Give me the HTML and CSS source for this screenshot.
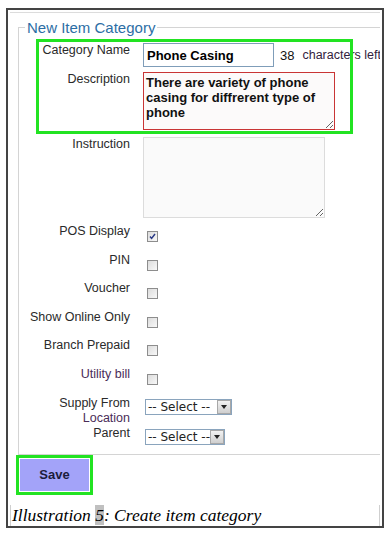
FILE: index.html
```html
<!DOCTYPE html>
<html lang="en">
<head>
    <meta charset="UTF-8">
    <meta name="viewport" content="width=device-width, initial-scale=1.0">
    <title>New Item Category</title>
    <link rel="stylesheet" href="styles.css">
</head>
<body>
    <div class="frame">
        <div class="sheet">
            <fieldset class="category-form">
                <legend>New Item Category</legend>
                <div class="marked">
                    <div class="row">
                        <label class="label label-inner">Category Name</label>
                        <div class="control">
                            <input class="text-input" type="text" value="Phone Casing">
                            <span class="count">38</span>
                            <span class="count-note">characters left</span>
                        </div>
                    </div>
                    <div class="row row-desc">
                        <label class="label label-inner">Description</label>
                        <textarea class="desc">There are variety of phone casing for diffrerent type of phone</textarea>
                    </div>
                </div>
                <div class="row row-instruction">
                    <label class="label">Instruction</label>
                    <textarea class="instruction"></textarea>
                </div>
                <div class="row check-row first-check">
                    <span class="label">POS Display</span>
                    <span class="check is-checked"><svg width="9" height="9" viewBox="0 0 9 9"><path d="M2 4.5 L3.6 6.4 L7 2" fill="none" stroke="#2a3a86" stroke-width="1.5"/></svg></span>
                </div>
                <div class="row check-row">
                    <span class="label">PIN</span>
                    <span class="check"></span>
                </div>
                <div class="row check-row">
                    <span class="label">Voucher</span>
                    <span class="check"></span>
                </div>
                <div class="row check-row">
                    <span class="label">Show Online Only</span>
                    <span class="check"></span>
                </div>
                <div class="row check-row">
                    <span class="label">Branch Prepaid</span>
                    <span class="check"></span>
                </div>
                <div class="row check-row">
                    <span class="label label-visited">Utility bill</span>
                    <span class="check"></span>
                </div>
                <div class="row select-row">
                    <span class="label">Supply From<br><span class="label-visited">Location</span></span>
                    <div class="select select-wide">
                        <span class="select-text">-- Select --</span>
                        <span class="select-btn"><span class="arrow"></span></span>
                    </div>
                </div>
                <div class="row select-row">
                    <span class="label">Parent</span>
                    <div class="select select-narrow">
                        <span class="select-text">-- Select --</span>
                        <span class="select-btn"><span class="arrow"></span></span>
                    </div>
                </div>
            </fieldset>
            <div class="save-mark">
                <button class="save">Save</button>
            </div>
            <p class="caption">Illustration <span class="num">5</span>: Create item category</p>
        </div>
    </div>
</body>
</html>
```

FILE: styles.css
```css
body {
    margin: 0;
    padding: 0;
    background: #fff;
    font-family: "Liberation Sans", Arial, sans-serif;
}
.frame {
    margin: 8px 0 0 6px;
    width: 378px;
    box-sizing: border-box;
    border: 2px solid #444;
    padding: 2px 2px 0 2px;
}
.sheet {
    border-top: 1px solid #dcdcdc;
    overflow: hidden;
}
.category-form {
    margin: 6px 0 0 8px;
    padding: 0 0 9px 0;
    border: 1px solid #d4d4d4;
    border-right: none;
    min-width: 0;
}
.category-form legend {
    margin-left: 6px;
    padding: 0 2px;
    font-size: 15px;
    line-height: 17px;
    color: #2c6ea5;
}
.marked {
    position: relative;
    margin: 3px 0 0 17px;
    width: 317px;
    box-sizing: border-box;
    padding: 4px 0 4px 3px;
}
.marked::after {
    content: "";
    position: absolute;
    inset: 0;
    border: 3px solid #22e322;
    pointer-events: none;
}
.row {
    display: flex;
    align-items: flex-start;
}
.label {
    flex: 0 0 auto;
    width: 111px;
    margin-right: 13px;
    text-align: right;
    font-size: 12.5px;
    line-height: 14px;
    color: #2a2a2a;
}
.label-inner {
    width: 91px;
}
.label-visited {
    color: #4a2c58;
}
.control {
    display: flex;
    align-items: center;
    white-space: nowrap;
}
.text-input {
    width: 131px;
    height: 24px;
    box-sizing: border-box;
    margin: 0;
    padding: 0 3px;
    border: 1px solid #7f9db9;
    font-family: "Liberation Sans", Arial, sans-serif;
    font-size: 13px;
    font-weight: bold;
    color: #000;
    outline: none;
}
.count {
    margin-left: 6px;
    font-size: 13px;
    color: #111;
}
.count-note {
    margin-left: 8px;
    font-size: 12.5px;
    color: #33223d;
}
.row-desc {
    margin-top: 5px;
}
textarea {
    display: block;
    margin: 0;
    box-sizing: border-box;
    padding: 2px;
    font-family: "Liberation Sans", Arial, sans-serif;
    font-size: 13px;
    font-weight: bold;
    line-height: 15px;
    color: #111;
    outline: none;
    overflow: hidden;
}
.desc {
    width: 192px;
    height: 58px;
    border: 1px solid #c93535;
    background: #fcfafa;
}
.row-instruction {
    margin-top: 3px;
}
.instruction {
    width: 182px;
    height: 81px;
    border: 1px solid #dcdcdc;
    background: #fafafa;
}
.check-row {
    height: 28.6px;
}
.first-check {
    margin-top: 6px;
}
.check {
    display: flex;
    align-items: center;
    justify-content: center;
    width: 11px;
    height: 11px;
    box-sizing: border-box;
    margin: 7px 0 0 4px;
    border: 1px solid #8d8d8d;
    background: linear-gradient(135deg, #dcdcdc, #f8f8f8);
}
.select-row .label {
    line-height: 15px;
}
.select {
    display: flex;
    align-items: center;
    height: 16px;
    box-sizing: border-box;
    margin: 3px 0 0 2px;
    border: 1px solid #8aa4bd;
    background: #fff;
    font-family: "DejaVu Sans", sans-serif;
    font-size: 12px;
    color: #222;
}
.select-wide {
    width: 87px;
}
.select-narrow {
    width: 80px;
}
.select-text {
    flex: 1;
    padding-left: 2px;
    line-height: 14px;
    white-space: nowrap;
}
.select-btn {
    display: flex;
    align-items: center;
    justify-content: center;
    width: 14px;
    height: 14px;
    box-sizing: border-box;
    border: 1px solid #a8a8a8;
    background: linear-gradient(#f2f2f2, #cfcfcf);
}
.arrow {
    width: 0;
    height: 0;
    border-left: 3px solid transparent;
    border-right: 3px solid transparent;
    border-top: 4px solid #222;
}
.save-mark {
    margin-left: 6px;
    width: 77px;
    box-sizing: border-box;
    border: 3px solid #22e322;
    padding: 1px;
}
.save {
    display: block;
    width: 100%;
    height: 32px;
    margin: 0;
    border: none;
    background-color: #a3a3f9;
    font-family: "Liberation Sans", Arial, sans-serif;
    font-size: 13px;
    font-weight: bold;
    color: #1c1c3c;
    cursor: pointer;
}
.caption {
    margin: 10px 0 0 0;
    padding-left: 1px;
    border-left: 1px solid #cfcfcf;
    border-right: 1px solid #cfcfcf;
    font-family: "Liberation Serif", "Times New Roman", serif;
    font-style: italic;
    font-size: 17.5px;
    line-height: 21px;
    color: #000;
}
.num {
    background: #c0c0c0;
}
```
